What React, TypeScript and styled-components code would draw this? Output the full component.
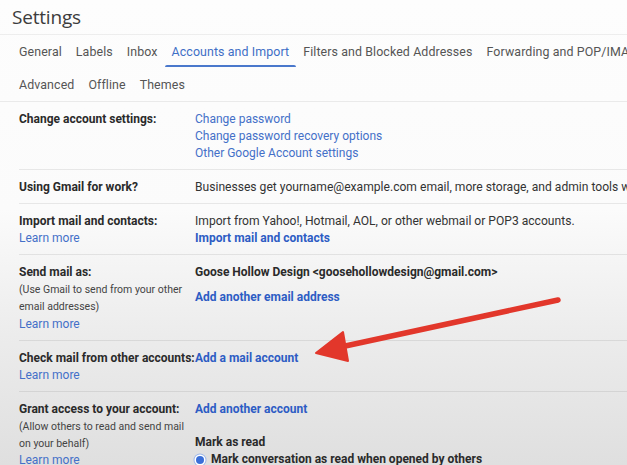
import React from 'react'
import styled, { createGlobalStyle } from 'styled-components'

const GlobalStyle = createGlobalStyle`
  html, body {
    margin: 0;
    padding: 0;
    width: 627px;
    height: 465px;
    overflow: hidden;
  }
  body {
    font-family: Roboto, "Liberation Sans", Arial, sans-serif;
    color: #222;
    background: linear-gradient(180deg, #fdfdfd 0%, #fbfbfb 45%, #ececec 72%, #dfdfdf 100%);
  }
`

const topTabs = ['General', 'Labels', 'Inbox', 'Accounts and Import', 'Filters and Blocked Addresses', 'Forwarding and POP/IMAP']
const bottomTabs = ['Advanced', 'Offline', 'Themes']

const App: React.FC = () => (
  <Page>
    <GlobalStyle />
    <Header>
      <Title>Settings</Title>
    </Header>
    <Tabs>
      <TabRow>
        {topTabs.map((tab) => (
          <Tab key={tab} active={tab === 'Accounts and Import'}>{tab}</Tab>
        ))}
      </TabRow>
      <TabRow>
        {bottomTabs.map((tab) => (
          <Tab key={tab} active={false}>{tab}</Tab>
        ))}
      </TabRow>
    </Tabs>
    <Table>
      <Row>
        <LabelCell>
          <Label>Change account settings:</Label>
        </LabelCell>
        <ValueCell>
          <Link>Change password</Link>
          <Link>Change password recovery options</Link>
          <Link>Other Google Account settings</Link>
        </ValueCell>
      </Row>
      <Row>
        <LabelCell>
          <Label>Using Gmail for work?</Label>
        </LabelCell>
        <ValueCell>
          <Text>Businesses get yourname@example.com email, more storage, and admin tools with Google Workspace.</Text>
        </ValueCell>
      </Row>
      <Row>
        <LabelCell>
          <Label>Import mail and contacts:</Label>
          <Link>Learn more</Link>
        </LabelCell>
        <ValueCell>
          <Text>Import from Yahoo!, Hotmail, AOL, or other webmail or POP3 accounts.</Text>
          <Link bold>Import mail and contacts</Link>
        </ValueCell>
      </Row>
      <Row>
        <LabelCell>
          <Label>Send mail as:</Label>
          <Hint>(Use Gmail to send from your other</Hint>
          <Hint>email addresses)</Hint>
          <Link gap={1}>Learn more</Link>
        </LabelCell>
        <ValueCell>
          <Strong>Goose Hollow Design &lt;goosehollowdesign@gmail.com&gt;</Strong>
          <Link bold gap={8}>Add another email address</Link>
        </ValueCell>
      </Row>
      <Row>
        <LabelCell>
          <Label>Check mail from other accounts:</Label>
          <Link>Learn more</Link>
        </LabelCell>
        <ValueCell>
          <Link bold>Add a mail account</Link>
        </ValueCell>
      </Row>
      <Row>
        <LabelCell>
          <Label>Grant access to your account:</Label>
          <Hint>(Allow others to read and send mail</Hint>
          <Hint>on your behalf)</Hint>
          <Link>Learn more</Link>
        </LabelCell>
        <ValueCell>
          <Link bold>Add another account</Link>
          <Strong gap={16}>Mark as read</Strong>
          <RadioLine>
            <Radio />
            <Strong>Mark conversation as read when opened by others</Strong>
          </RadioLine>
        </ValueCell>
      </Row>
    </Table>
    <Arrow viewBox="0 0 627 465" width="627" height="465">
      <line x1="558" y1="300" x2="336" y2="348" stroke="#e2372b" strokeWidth="5.5" strokeLinecap="round" />
      <polygon points="316,353 343,332 348,361" fill="#e2372b" stroke="#e2372b" strokeWidth="2" strokeLinejoin="round" />
    </Arrow>
  </Page>
)
export default App

const Page = styled.div`
  position: relative;
  width: 627px;
  height: 465px;
  overflow: hidden;
`
const Header = styled.header`
  height: 35px;
  display: flex;
  align-items: center;
  padding-left: 12px;
  border-bottom: 1px solid rgba(0, 0, 0, 0.06);
  box-sizing: border-box;
`
const Title = styled.h1`
  margin: 0;
  font-family: "Open Sans", Roboto, sans-serif;
  font-size: 19px;
  font-weight: 400;
  color: #3c3c3c;
  letter-spacing: -0.2px;
`
const Tabs = styled.nav`
  padding-left: 12px;
  border-bottom: 1px solid rgba(0, 0, 0, 0.07);
`
const TabRow = styled.div`
  display: flex;
  height: 33px;
  white-space: nowrap;
`
const Tab = styled.div<{ active: boolean }>`
  position: relative;
  display: flex;
  align-items: center;
  padding: 0 7px;
  font-size: 12.4px;
  color: ${({ active }) => (active ? '#3f6fc6' : '#555')};
  letter-spacing: 0.1px;
  &::after {
    content: '';
    display: ${({ active }) => (active ? 'block' : 'none')};
    position: absolute;
    left: 0;
    right: 0;
    bottom: 1px;
    height: 2.5px;
    border-radius: 2px 2px 0 0;
    background: #4a78cc;
  }
`
const Table = styled.div`
  margin-left: 19px;
`
const Row = styled.div`
  display: flex;
  padding: 9px 0 7px;
  border-bottom: 1px solid rgba(0, 0, 0, 0.08);
  line-height: 17px;
  white-space: nowrap;
`
const LabelCell = styled.div`
  width: 176px;
  flex: 0 0 176px;
  display: flex;
  flex-direction: column;
`
const ValueCell = styled.div`
  display: flex;
  flex-direction: column;
  align-items: flex-start;
`
const Label = styled.span`
  font-size: 12px;
  font-weight: 700;
  color: #2a2a2a;
`
const Hint = styled.span`
  font-size: 10.5px;
  color: #444;
`
const Text = styled.span`
  font-size: 12.1px;
  color: #333;
`
const Strong = styled.span<{ gap?: number }>`
  font-size: 12px;
  font-weight: 700;
  color: #2a2a2a;
  margin-top: ${({ gap }) => gap ?? 0}px;
`
const Link = styled.span<{ bold?: boolean; gap?: number }>`
  font-size: 12px;
  font-weight: ${({ bold }) => (bold ? 700 : 400)};
  color: ${({ bold }) => (bold ? '#2d5cc4' : '#4470c8')};
  margin-top: ${({ gap }) => gap ?? 0}px;
`
const RadioLine = styled.div`
  display: flex;
  align-items: center;
  gap: 7px;
  padding-left: 1px;
`
const Radio = styled.span`
  width: 8px;
  height: 8px;
  border-radius: 50%;
  background: #3a6fd8;
  box-shadow: 0 0 0 1.5px #fff, 0 0 0 2.5px #9fb8e8;
`
const Arrow = styled.svg`
  position: absolute;
  left: 0;
  top: 0;
  pointer-events: none;
`
